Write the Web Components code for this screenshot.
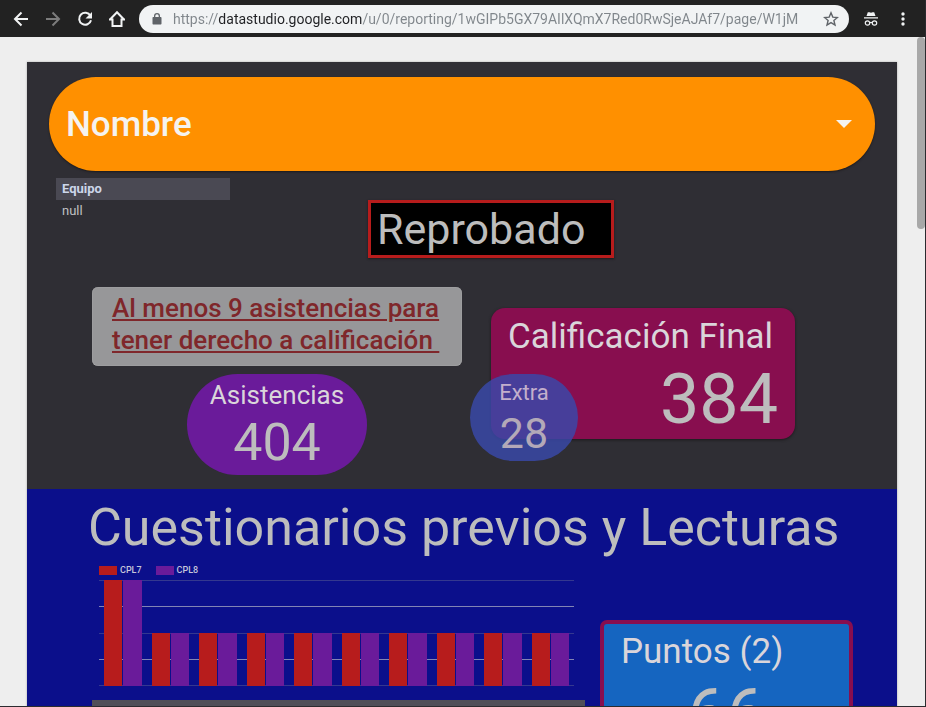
<!DOCTYPE html>
<html lang="es">
<head>
<meta charset="utf-8">
<title>Informe</title>
<style>
  html, body { height: 100%; }
  body { margin: 0; overflow: hidden; font-family: Roboto, "Liberation Sans", sans-serif; background: #222; }
</style>
</head>
<body>
<browser-window>
  <browser-toolbar slot="toolbar"></browser-toolbar>
  <report-page>
    <report-summary>
      <name-filter slot="filter" label="Nombre"></name-filter>
      <team-table slot="team" heading="Equipo" value="null"></team-table>
      <status-box slot="status">Reprobado</status-box>
      <notice-box slot="notice">Al menos 9 asistencias para tener derecho a calificación&nbsp;</notice-box>
      <score-card slot="attendance" class="pill" label="Asistencias" value="404"></score-card>
      <score-card slot="final" class="final" label="Calificación Final" value="384"></score-card>
      <score-card slot="extra" class="extra" label="Extra" value="28"></score-card>
    </report-summary>
    <report-quizzes>
      <span slot="title">Cuestionarios previos y Lecturas</span>
      <bar-chart slot="chart" values="100,50,50,50,50,50,50,50,50,50"></bar-chart>
      <score-card slot="points" class="points" label="Puntos (2)" value="66"></score-card>
    </report-quizzes>
  </report-page>
</browser-window>

<script>
const define = (name, html, setup) => {
  const template = document.createElement('template');
  template.innerHTML = html;
  customElements.define(name, class extends HTMLElement {
    connectedCallback() {
      if (this.shadowRoot) return;
      const root = this.attachShadow({ mode: 'open' });
      root.append(template.content.cloneNode(true));
      if (setup) setup(this, root);
    }
  });
};

define('browser-window', `
  <style>
    :host { display: flex; flex-direction: column; height: 100vh; box-sizing: border-box;
      border: solid #2b2b2f; border-width: 0 1px 1px 0; }
    .view { flex: 1; min-height: 0; position: relative; overflow: hidden; background: #eee; padding: 25px 28px 0 27px; }
    .thumb { position: absolute; top: 0; right: 0; width: 8px; height: 192px; border-radius: 4px; background: #a8a8a8; }
  </style>
  <slot name="toolbar"></slot>
  <div class="view"><slot></slot><div class="thumb"></div></div>
`);

define('browser-toolbar', `
  <style>
    :host { display: flex; align-items: center; height: 37px; padding: 0 6px 0 5px; background: #222; color: #f1f3f4; }
    button { flex: none; width: 32px; height: 32px; padding: 0; border: 0; background: none; color: inherit;
      display: grid; place-items: center; }
    button:disabled { color: #7c7c7c; }
    svg { display: block; fill: none; stroke: currentColor; stroke-width: 2; }
    .solid { fill: currentColor; stroke: none; }
    .bar { flex: 1; min-width: 0; display: flex; align-items: center; height: 28px; margin: 0 6px;
      padding: 0 2px 0 12px; border-radius: 14px; background: #f1f3f4; color: #5f6368; }
    input { flex: 1; min-width: 0; margin-left: 10px; padding: 0; border: 0; outline: 0; height: 28px;
      font: 14px Roboto, "Open Sans", sans-serif; color: #80868b;
      background: linear-gradient(90deg, #80868b 45px, #202124 45px, #202124 189px, #80868b 189px);
      -webkit-background-clip: text; background-clip: text; -webkit-text-fill-color: transparent; }
  </style>
  <button aria-label="Atrás"><svg width="16" height="16" viewBox="0 0 16 16"><path d="M15 8H2.5M8.5 1.5L2 8l6.500 6.500"/></svg></button>
  <button aria-label="Adelante" disabled><svg width="16" height="16" viewBox="0 0 16 16"><path d="M1 8h12.500M7.500 1.500L14 8l-6.500 6.500"/></svg></button>
  <button aria-label="Recargar"><svg width="16" height="16" viewBox="0 0 16 16"><path d="M13.400 4.800A6 6 0 1 0 14 9.200"/><path class="solid" d="M15 1v6.500H8.500z"/></svg></button>
  <button aria-label="Inicio"><svg width="18" height="18" viewBox="0 0 18 18"><path d="M2 9.500L9 2.300l7 7.200M1 9.500h3.500V16h9V9.500H17" stroke-linejoin="miter"/></svg></button>
  <div class="bar">
    <svg class="solid" width="12" height="14" viewBox="0 0 12 14"><path fill-rule="evenodd" d="M3 5V4a3 3 0 0 1 6 0v1h.5c.6 0 1 .4 1 1v5.500c0 .6-.4 1-1 1h-7c-.6 0-1-.4-1-1V6c0-.6.4-1 1-1zM4.300 5h3.400V4a1.700 1.700 0 0 0-3.400 0z"/></svg>
    <input type="text" aria-label="Dirección" value="https://datastudio.google.com/u/0/reporting/1wGIPb5GX79AIlXQmX7Red0RwSjeAJAf7/page/W1jM">
    <button aria-label="Marcador"><svg width="16" height="16" viewBox="0 0 16 16"><path stroke-width="1.400" d="M8 1.800l1.800 4.300 4.600.4-3.500 3 1.100 4.500L8 11.600 4 14l1.100-4.500-3.500-3 4.600-.4z"/></svg></button>
  </div>
  <button aria-label="Incógnito"><svg width="16" height="16" viewBox="0 0 16 16"><path class="solid" d="M4.800 1.200h1.700L8 1.700l1.500-.5h1.700L12.500 5h-9zM1 6.200h14v1.300H1z"/><g stroke-width="1.200"><circle cx="4.500" cy="12" r="2.200"/><circle cx="11.500" cy="12" r="2.200"/><path d="M6.700 11.700q1.300-.8 2.600 0"/></g></svg></button>
  <button aria-label="Menú"><svg class="solid" width="16" height="16" viewBox="0 0 16 16"><circle cx="8" cy="3" r="1.700"/><circle cx="8" cy="8" r="1.700"/><circle cx="8" cy="13" r="1.700"/></svg></button>
`);

define('report-page', `
  <style>:host { display: block; box-shadow: 0 0 2px #aaa; }</style>
  <slot></slot>
`);

/* Column tracks share the report's width in proportion. */
define('report-summary', `
  <style>
    :host { display: block; background: #2f2e34; padding: 15px 0 14px; }
    .filter { padding: 0 22px; }
    .row { display: grid; align-items: start; }
    .top { grid-template-columns: 29fr 174fr 138fr 246fr 283fr; padding-top: 7px; }
    .team { grid-column: 2; }
    .status { grid-column: 4; padding-top: 22px; }
    .main { grid-template-columns: 65fr 370fr 29fr 304fr 102fr; padding-top: 29px; }
    .left { grid-column: 2; display: grid; gap: 8px; }
    .attendance { margin: 0 95px; }
    .right { grid-column: 4; position: relative; padding-top: 21px; }
    .extra { position: absolute; left: -21px; top: 87px; }
  </style>
  <div class="filter"><slot name="filter"></slot></div>
  <div class="row top">
    <div class="team"><slot name="team"></slot></div>
    <div class="status"><slot name="status"></slot></div>
  </div>
  <div class="row main">
    <div class="left"><slot name="notice"></slot><div class="attendance"><slot name="attendance"></slot></div></div>
    <div class="right"><slot name="final"></slot><div class="extra"><slot name="extra"></slot></div></div>
  </div>
`);

define('name-filter', `
  <style>
    :host { display: flex; align-items: center; height: 94px; padding: 0 23px 0 17px; border-radius: 47px;
      background: #ff9000; color: #f5f3f0; box-shadow: 0 1px 2px #1c1a1c; }
    select { flex: 1; min-width: 0; height: 94px; padding: 0; border: 0; outline: 0; appearance: none;
      background: none; color: inherit; font: 500 35px Roboto, sans-serif; }
    svg { flex: none; display: block; fill: currentColor; pointer-events: none; }
  </style>
  <select aria-label="Nombre"><option></option></select>
  <svg width="16" height="8" viewBox="0 0 16 8"><path d="M0 0h16L8 8z"/></svg>
`, (host, root) => { root.querySelector('option').textContent = host.getAttribute('label'); });

define('team-table', `
  <style>
    :host { display: block; }
    table { width: 100%; border-collapse: collapse; font-size: 13px; line-height: 16px; color: #c0c0c2; }
    th, td { height: 22px; padding: 0 6px; text-align: left; font-weight: 400; }
    th { background: #4a4953; color: #ccd6ea; font-weight: 700; }
  </style>
  <table><thead><tr><th scope="col"></th></tr></thead><tbody><tr><td></td></tr></tbody></table>
`, (host, root) => {
  root.querySelector('th').textContent = host.getAttribute('heading');
  root.querySelector('td').textContent = host.getAttribute('value');
});

define('status-box', `
  <style>
    :host { display: block; padding: 1px 6px 0; border: 3px solid #b71c1c; background: #000; color: #bdbdbd;
      font-size: 43px; line-height: 51px; box-shadow: 0 1px 2px #1c1a1c; }
  </style>
  <slot></slot>
`);

define('notice-box', `
  <style>
    :host { display: block; box-sizing: border-box; min-height: 79px; padding: 5px 16px 10px 20px; border-radius: 6px;
      background: #979799; color: #7f272b; box-shadow: inset 0 0 1px #d0d0d0;
      font-size: 26px; line-height: 32px; font-weight: 500; }
    p { margin: 0; text-decoration: underline; }
  </style>
  <p><slot></slot></p>
`);

define('score-card', `
  <style>
    :host { display: flex; flex-direction: column; box-sizing: border-box; color: #bdbdbd; }
    .label { color: #dad5da; }
    :host(.pill) { align-items: center; padding: 5px 0 1px; border-radius: 51px; background: #6a1b9a; font-size: 52px; line-height: 62px; }
    :host(.pill) .label { font-size: 26px; line-height: 33px; }
    :host(.final) { padding: 6px 17px 0; border-radius: 14px; background: #880e4f; font-size: 70px; line-height: 80px;
      box-shadow: 0 1px 3px #1c1a1c; }
    :host(.final) .label { font-size: 35px; line-height: 45px; white-space: nowrap; }
    :host(.final) .value { text-align: right; }
    :host(.extra) { align-items: center; width: 108px; padding: 3px 0 2px; border-radius: 44px;
      background: rgba(57, 73, 171, .82); font-size: 43px; line-height: 51px; color: #b3a9b8; }
    :host(.extra) .label { font-size: 22px; line-height: 31px; color: #c3afcc; }
    :host(.points) { padding: 5px 17px; border: 4px solid #880e4f; border-radius: 7px; background: #1565c0; font-size: 70px; line-height: 80px; }
    :host(.points) .label { font-size: 35px; line-height: 45px; }
    :host(.points) .value { text-align: center; }
  </style>
  <div class="label"></div>
  <div class="value"></div>
`, (host, root) => {
  root.querySelector('.label').textContent = host.getAttribute('label');
  root.querySelector('.value').textContent = host.getAttribute('value');
});

define('report-quizzes', `
  <style>
    :host { display: block; min-height: 400px; background: #0b0f8b; color: #bdbdbd; }
    h1 { margin: 0; padding: 9px 0 0 61px; font-size: 52px; line-height: 60px; font-weight: 400; white-space: nowrap; }
    .row { display: grid; grid-template-columns: 65fr 493fr 15fr 253fr 44fr; align-items: start; padding-top: 6px; }
    .chart { grid-column: 2; }
    .points { grid-column: 4; padding-top: 56px; }
    .head { height: 22px; margin-top: 14px; background: #504f58; }
  </style>
  <h1><slot name="title"></slot></h1>
  <div class="row">
    <div class="chart"><slot name="chart"></slot><div class="head"></div></div>
    <div class="points"><slot name="points"></slot></div>
  </div>
`);

define('bar-chart', `
  <style>
    :host { display: block; padding: 0 11px 0 7px; }
    .legend { display: flex; gap: 14px; font-size: 9px; line-height: 12px; font-weight: 500; color: #c6c6da; }
    .legend span { display: flex; align-items: center; gap: 3px; }
    .legend i { width: 18px; height: 9px; }
    .red { background: #b71c1c; }
    .purple { background: #6a1b9a; }
    .plot { display: grid; height: 106px; margin-top: 4px; }
    .lines, .bars { grid-area: 1 / 1; display: flex; }
    .lines { flex-direction: column; justify-content: space-between; }
    .lines i { height: 1px; background: #34388f; }
    .lines i:nth-child(even) { background: #8284b4; }
    .group { flex: 1; display: flex; align-items: flex-end; gap: 1px; padding: 0 5px; }
    .group i { flex: 1; }
  </style>
  <div class="legend"><span><i class="red"></i>CPL7</span><span><i class="purple"></i>CPL8</span></div>
  <div class="plot">
    <div class="lines"><i></i><i></i><i></i><i></i><i></i></div>
    <div class="bars"></div>
  </div>
`, (host, root) => {
  const bars = root.querySelector('.bars');
  for (const value of host.getAttribute('values').split(',')) {
    const group = document.createElement('div');
    group.className = 'group';
    for (const series of ['red', 'purple']) {
      const bar = document.createElement('i');
      bar.className = series;
      bar.style.height = value + '%';
      group.append(bar);
    }
    bars.append(group);
  }
});
</script>
</body>
</html>
